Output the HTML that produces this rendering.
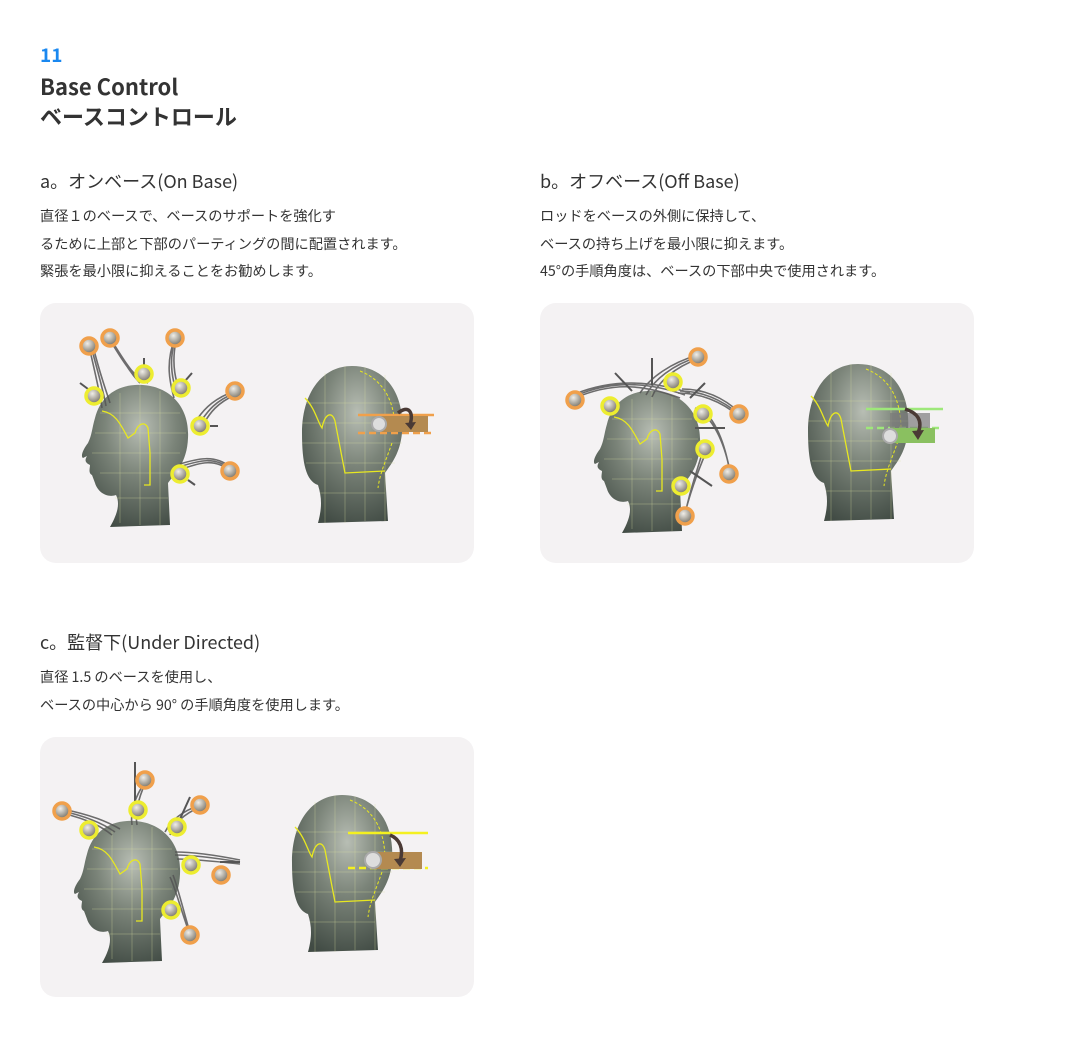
<!DOCTYPE html>
<html><head><meta charset="utf-8">
<style>
*{margin:0;padding:0;box-sizing:border-box}
body{width:1080px;height:1040px;background:#fff;font-family:"Noto Sans CJK JP","Liberation Sans",sans-serif;color:#333;position:relative}
.num{position:absolute;left:40px;top:42px;font-size:19px;font-weight:bold;color:#1a88f0;line-height:26px}
.h1{position:absolute;left:40px;top:71px;font-size:22px;font-weight:bold;line-height:30px;color:#333}
.sec{position:absolute;width:480px}
.sec h2{font-size:18px;font-weight:normal;line-height:24px;color:#333}
.sec p{font-size:14.2px;line-height:27.5px;margin-top:10px;color:#333}
.card{position:absolute;width:434px;height:260px;background:#f4f2f3;border-radius:16px;overflow:hidden}
.card svg{position:absolute;left:0;top:0}
</style></head><body>
<div class="num">11</div>
<div class="h1">Base Control<br>ベースコントロール</div>

<div class="sec" style="left:40px;top:169px"><h2>a。オンベース(On Base)</h2>
<p>直径１のベースで、ベースのサポートを強化す<br>るために上部と下部のパーティングの間に配置されます。<br>緊張を最小限に抑えることをお勧めします。</p></div>
<div class="sec" style="left:540px;top:169px"><h2>b。オフベース(Off Base)</h2>
<p>ロッドをベースの外側に保持して、<br>ベースの持ち上げを最小限に抑えます。<br>45°の手順角度は、ベースの下部中央で使用されます。</p></div>
<div class="sec" style="left:40px;top:630px"><h2>c。監督下(Under Directed)</h2>
<p>直径 1.5 のベースを使用し、<br>ベースの中心から 90° の手順角度を使用します。</p></div>

<svg width="0" height="0" style="position:absolute">
<defs>
<radialGradient id="hg" cx="0.55" cy="0.3" r="0.75"><stop offset="0" stop-color="#b8beb4"/><stop offset="0.45" stop-color="#7b8479"/><stop offset="1" stop-color="#414b44"/></radialGradient>
<radialGradient id="cg" cx="0.4" cy="0.35" r="0.7"><stop offset="0" stop-color="#f0eee8"/><stop offset="1" stop-color="#6b6558"/></radialGradient>
<symbol id="prof" viewBox="0 0 434 260">
<path d="M95,82 C125,80 150,100 148,135 C147,160 135,170 128,180 L130,222 L70,224 C78,210 80,200 76,192 C68,195 58,190 55,180 L52,172 C48,170 50,165 50,162 C46,160 44,158 47,153 L43,155 C40,153 44,145 48,140 C52,132 52,125 55,115 C60,95 75,83 95,82 Z" fill="url(#hg)"/>
<path d="M60,110 L140,110 M55,130 L146,130 M52,150 L140,150 M60,170 L130,170 M75,195 L128,195 M80,90 L80,220 M100,82 L100,222 M120,88 L120,222" stroke="#d8e0a0" stroke-width="0.5" opacity="0.6" fill="none"/>
<path d="M62,108 C75,110 80,120 88,135 L95,130 C98,120 105,118 108,125 L110,150 L110,182 L104,182" stroke="#e8e820" stroke-width="1.3" fill="none"/>
</symbol>
<symbol id="back" viewBox="0 0 434 260">
<path d="M312,63 C345,63 365,90 362,130 C360,150 352,160 345,170 L348,218 L278,220 C282,205 282,195 278,182 C266,178 262,160 262,130 C262,90 282,63 312,63 Z" fill="url(#hg)"/>
<path d="M265,100 L360,100 M262,120 L362,120 M262,140 L362,140 M266,160 L355,160 M280,190 L345,190 M285,70 L285,220 M305,63 L305,220 M325,64 L325,218 M345,72 L345,218" stroke="#d8e0a0" stroke-width="0.5" opacity="0.6" fill="none"/>
<path d="M265,95 C275,105 278,120 282,125 C285,110 292,108 295,118 L305,170 L345,168" stroke="#e8e820" stroke-width="1.3" fill="none"/>
<path d="M320,68 C345,78 355,100 355,128 M352,140 C345,160 340,170 338,185" stroke="#e8e820" stroke-width="1" stroke-dasharray="3,2" fill="none"/>
</symbol>
</defs></svg>

<!-- Card A -->
<div class="card" style="left:40px;top:303px">
<svg width="434" height="260">
<use href="#prof" x="0" y="0" width="434" height="260"/>
<g stroke="#555" stroke-width="1.6" fill="none" opacity="0.85">
<path d="M49,43 C55,70 60,90 62,105 M51,43 C58,70 64,90 66,103 M53,43 C60,72 67,90 70,100"/>
<path d="M70,35 C85,60 90,70 100,80 M70,37 C85,62 92,72 104,80 M72,38 C88,64 95,75 108,80"/>
<path d="M135,35 C125,60 130,80 134,95 M135,37 C128,60 133,80 138,92 M136,38 C131,62 136,80 141,90"/>
<path d="M195,88 C175,95 165,105 158,115 M195,90 C175,98 168,108 161,118 M195,92 C177,100 170,110 164,120"/>
<path d="M190,168 C175,155 160,160 145,165 M190,166 C175,153 158,158 142,163 M190,164 C175,151 156,156 140,161"/>
</g>
<g stroke="#555" stroke-width="2"><line x1="104" y1="55" x2="104" y2="65"/><line x1="152" y1="70" x2="145" y2="78"/><line x1="40" y1="80" x2="48" y2="86"/><line x1="170" y1="123" x2="178" y2="123"/><line x1="148" y1="177" x2="155" y2="182"/></g>
<g stroke-width="3.5" fill="url(#cg)">
<circle cx="49" cy="43" r="8" stroke="#f0a04b"/><circle cx="70" cy="35" r="8" stroke="#f0a04b"/><circle cx="135" cy="35" r="8" stroke="#f0a04b"/><circle cx="195" cy="88" r="8" stroke="#f0a04b"/><circle cx="190" cy="168" r="8" stroke="#f0a04b"/>
<circle cx="104" cy="71" r="8" stroke="#eded30"/><circle cx="54" cy="93" r="8" stroke="#eded30"/><circle cx="141" cy="85" r="8" stroke="#eded30"/><circle cx="160" cy="123" r="8" stroke="#eded30"/><circle cx="140" cy="171" r="8" stroke="#eded30"/>
</g>
<use href="#back" x="0" y="0" width="434" height="260"/>
<line x1="318" y1="112" x2="394" y2="112" stroke="#f0a04b" stroke-width="2.5"/>
<line x1="318" y1="130" x2="394" y2="130" stroke="#f0a04b" stroke-width="2.5" stroke-dasharray="7,4"/>
<rect x="338" y="113" width="50" height="16" fill="#b48a50"/>
<circle cx="339" cy="121" r="7" fill="#ddd" stroke="#aaa" stroke-width="2"/>
<path d="M358,110 C368,102 374,108 370,122" stroke="#4a3a35" stroke-width="3.5" fill="none"/><path d="M365,120 L371,127 L376,119 Z" fill="#4a3a35"/>
</svg></div>

<!-- Card B -->
<div class="card" style="left:540px;top:303px">
<svg width="434" height="260">
<use href="#prof" x="12" y="6" width="434" height="260"/>
<g stroke="#555" stroke-width="1.6" fill="none" opacity="0.85">
<path d="M35,95 C70,80 100,80 140,95 M35,93 C70,78 105,78 145,92 M35,91 C72,76 110,77 150,90"/>
<path d="M158,52 C130,60 110,75 100,90 M158,54 C132,62 114,77 106,92 M158,56 C135,64 118,79 112,94"/>
<path d="M200,112 C180,95 160,88 140,88 M200,110 C182,93 162,86 142,86 M200,114 C180,97 158,90 138,90"/>
<path d="M190,170 C185,140 175,115 160,105 M190,168 C184,138 172,113 155,105"/>
<path d="M145,212 C150,185 160,160 165,140 M145,210 C152,183 162,158 170,140"/>
</g>
<g stroke="#555" stroke-width="2"><line x1="112" y1="55" x2="112" y2="82"/><line x1="75" y1="70" x2="92" y2="88"/><line x1="165" y1="80" x2="150" y2="95"/><line x1="155" y1="125" x2="185" y2="125"/><line x1="150" y1="168" x2="172" y2="183"/></g>
<g stroke-width="3.5" fill="url(#cg)">
<circle cx="35" cy="97" r="8" stroke="#f0a04b"/><circle cx="158" cy="54" r="8" stroke="#f0a04b"/><circle cx="199" cy="111" r="8" stroke="#f0a04b"/><circle cx="189" cy="171" r="8" stroke="#f0a04b"/><circle cx="145" cy="213" r="8" stroke="#f0a04b"/>
<circle cx="70" cy="103" r="8" stroke="#eded30"/><circle cx="133" cy="79" r="8" stroke="#eded30"/><circle cx="163" cy="111" r="8" stroke="#eded30"/><circle cx="165" cy="146" r="8" stroke="#eded30"/><circle cx="141" cy="183" r="8" stroke="#eded30"/>
</g>
<use href="#back" x="6" y="-2" width="434" height="260"/>
<line x1="326" y1="106" x2="403" y2="106" stroke="#9ee87a" stroke-width="2.5"/>
<line x1="326" y1="125" x2="403" y2="125" stroke="#9ee87a" stroke-width="2.5" stroke-dasharray="7,4"/>
<rect x="350" y="110" width="40" height="16" fill="#7a7a7a" opacity="0.7"/>
<rect x="350" y="125" width="45" height="15" fill="#8ac060"/>
<circle cx="350" cy="133" r="7" fill="#ddd" stroke="#aaa" stroke-width="2"/>
<path d="M365,106 C378,110 383,118 378,130" stroke="#4a3a35" stroke-width="3.5" fill="none"/><path d="M372,128 L378,137 L384,127 Z" fill="#4a3a35"/>
</svg></div>

<!-- Card C -->
<div class="card" style="left:40px;top:737px">
<svg width="434" height="260">
<use href="#prof" x="-8" y="2" width="434" height="260"/>
<g stroke="#555" stroke-width="1.6" fill="none" opacity="0.85">
<path d="M22,74 C50,80 65,88 75,95 M22,72 C52,78 68,85 80,92 M22,76 C50,83 62,90 72,98"/>
<path d="M105,45 C95,60 90,75 92,88 M105,47 C98,62 95,77 97,88"/>
<path d="M160,68 C140,75 130,85 125,95 M160,70 C142,78 133,88 130,98"/>
<path d="M200,125 C170,120 150,118 135,118 M200,123 C170,117 150,115 135,115 M200,127 C172,124 152,122 137,122"/>
<path d="M150,198 C140,170 135,150 130,140 M150,196 C142,168 137,148 133,138"/>
</g>
<g stroke="#555" stroke-width="2"><line x1="95" y1="25" x2="95" y2="70"/><line x1="180" y1="125" x2="200" y2="125"/><line x1="150" y1="60" x2="140" y2="82"/></g>
<g stroke-width="3.5" fill="url(#cg)">
<circle cx="22" cy="74" r="8" stroke="#f0a04b"/><circle cx="105" cy="43" r="8" stroke="#f0a04b"/><circle cx="160" cy="68" r="8" stroke="#f0a04b"/><circle cx="181" cy="138" r="8" stroke="#f0a04b"/><circle cx="150" cy="198" r="8" stroke="#f0a04b"/>
<circle cx="49" cy="93" r="8" stroke="#eded30"/><circle cx="98" cy="73" r="8" stroke="#eded30"/><circle cx="137" cy="90" r="8" stroke="#eded30"/><circle cx="151" cy="128" r="8" stroke="#eded30"/><circle cx="131" cy="173" r="8" stroke="#eded30"/>
</g>
<use href="#back" x="-10" y="-5" width="434" height="260"/>
<line x1="308" y1="96" x2="388" y2="96" stroke="#f4f020" stroke-width="2.5"/>
<line x1="308" y1="131" x2="388" y2="131" stroke="#f4f020" stroke-width="2.5" stroke-dasharray="7,4"/>
<rect x="332" y="115" width="50" height="17" fill="#b48a50"/>
<circle cx="333" cy="123" r="8" fill="#ddd" stroke="#aaa" stroke-width="2"/>
<path d="M350,98 C360,102 364,112 360,124" stroke="#4a3a35" stroke-width="3.5" fill="none"/><path d="M354,122 L360,130 L366,121 Z" fill="#4a3a35"/>
</svg></div>
</body></html>
